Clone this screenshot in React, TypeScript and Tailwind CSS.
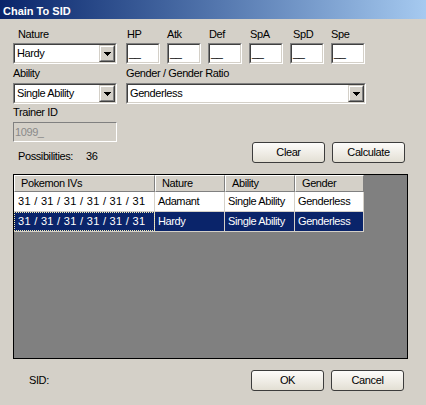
import React from "react";

function Sunken({
  className = "",
  inner = "bg-white",
  children,
}: {
  className?: string;
  inner?: string;
  children?: React.ReactNode;
}) {
  return (
    <div className={`border border-t-[#808080] border-l-[#808080] border-b-white border-r-white ${className}`}>
      <div className={`h-full w-full border border-t-[#404040] border-l-[#404040] border-b-[#d4d0c8] border-r-[#d4d0c8] ${inner} flex items-center`}>
        {children}
      </div>
    </div>
  );
}

function DropBtn() {
  return (
    <div className="w-[16px] h-full border border-t-[#d4d0c8] border-l-[#d4d0c8] border-b-[#404040] border-r-[#404040]">
      <div className="w-full h-full border border-t-white border-l-white border-b-[#808080] border-r-[#808080] bg-[#d4d0c8] flex items-center justify-center">
        <svg width="7" height="4" viewBox="0 0 7 4" shapeRendering="crispEdges">
          <rect x="0" y="0" width="7" height="1" fill="#000" />
          <rect x="1" y="1" width="5" height="1" fill="#000" />
          <rect x="2" y="2" width="3" height="1" fill="#000" />
          <rect x="3" y="3" width="1" height="1" fill="#000" />
        </svg>
      </div>
    </div>
  );
}

function Combo({ text, w }: { text: string; w: string }) {
  return (
    <Sunken className={`${w} h-[21px]`}>
      <span className="flex-1 pl-[2px] leading-[13px] whitespace-nowrap">{text}</span>
      <DropBtn />
    </Sunken>
  );
}

function StatBox({ label, pl }: { label: string; pl: string }) {
  return (
    <div className="w-[34px] flex flex-col">
      <div className={`h-[13px] leading-[13px] ${pl}`}>{label}</div>
      <Sunken className="mt-[2px] h-[21px] w-[34px]">
        <span className="pl-[1px] leading-[13px]">__</span>
      </Sunken>
    </div>
  );
}

function Btn({ label }: { label: string }) {
  return (
    <div className="w-[73px] h-[21px] rounded-[3px] border border-[#3c3c3c] bg-linear-to-b from-[#fdfcfa] to-[#e3dfd4] flex items-center justify-center leading-[13px]">
      {label}
    </div>
  );
}

const cols = ["w-[141px]", "w-[70px]", "w-[70px]", "w-[69px]"];
const headers = ["Pokemon IVs", "Nature", "Ability", "Gender"];
const rows = [
  ["31 / 31 / 31 / 31 / 31 / 31", "Adamant", "Single Ability", "Genderless"],
  ["31 / 31 / 31 / 31 / 31 / 31", "Hardy", "Single Ability", "Genderless"],
];

export default function App() {
  return (
    <div className="w-[426px] h-[405px] bg-[#d4d0c8] flex flex-col overflow-hidden text-[11px] tracking-[-0.4px] text-black font-['Liberation_Sans',Arial,sans-serif]">
      {/* Title bar */}
      <div className="h-[19px] shrink-0 bg-linear-to-r from-[#0a246a] to-[#a6caf0] pl-[3px] pt-[5px] leading-[13px] font-bold text-white tracking-normal">
        Chain To SID
      </div>

      {/* Row A */}
      <div className="flex pl-[13px] mt-[9px]">
        <div className="w-[104px] flex flex-col">
          <div className="h-[13px] leading-[13px] pl-[5px]">Nature</div>
          <div className="mt-[2px]">
            <Combo text="Hardy" w="w-[104px]" />
          </div>
        </div>
        <div className="ml-[9px] flex gap-[7px]">
          <StatBox label="HP" pl="pl-[1px]" />
          <StatBox label="Atk" pl="pl-0" />
          <StatBox label="Def" pl="pl-[1px]" />
          <StatBox label="SpA" pl="pl-[1px]" />
          <StatBox label="SpD" pl="pl-[3px]" />
          <StatBox label="Spe" pl="pl-0" />
        </div>
      </div>

      {/* Row B */}
      <div className="flex pl-[13px] mt-[3px]">
        <div className="w-[104px] flex flex-col">
          <div className="h-[13px] leading-[13px]">Ability</div>
          <div className="mt-[3px]">
            <Combo text="Single Ability" w="w-[104px]" />
          </div>
        </div>
        <div className="ml-[9px] w-[240px] flex flex-col">
          <div className="h-[13px] leading-[13px]">Gender / Gender Ratio</div>
          <div className="mt-[3px]">
            <Combo text="Genderless" w="w-[240px]" />
          </div>
        </div>
      </div>

      {/* Row C */}
      <div className="flex items-end justify-between pl-[13px] pr-[21px]">
        <div className="flex flex-col">
          <div className="mt-[2px] h-[13px] leading-[13px]">Trainer ID</div>
          <div className="mt-[3px] w-[104px] h-[20px] border border-t-[#808080] border-l-[#808080] border-b-white border-r-white flex items-center">
            <span className="pl-[1px] leading-[13px] text-[#8a8a8a]">1099_</span>
          </div>
          <div className="mt-[8px] h-[13px] leading-[13px] pl-[5px] flex">
            <span className="w-[68px]">Possibilities:</span>
            <span>36</span>
          </div>
        </div>
        <div className="flex gap-[7px]">
          <Btn label="Clear" />
          <Btn label="Calculate" />
        </div>
      </div>

      {/* List view */}
      <div className="ml-[13px] mt-[11px] w-[395px] h-[185px] shrink-0 border border-black bg-[#808080] flex flex-col">
        <div className="flex h-[17px] shrink-0">
          {headers.map((h, i) => (
            <div
              key={h}
              className={`${cols[i]} h-full bg-[#d4d0c8] border border-t-white border-l-white border-b-[#808080] border-r-[#808080] flex items-center pl-[6px] leading-[13px] whitespace-nowrap`}
            >
              {h}
            </div>
          ))}
        </div>
        {rows.map((r, ri) => {
          const sel = ri === 1;
          return (
            <div
              key={ri}
              className={`flex h-[20px] shrink-0 w-[350px] border-b border-b-[#d4d0c8] ${sel ? "bg-[#0a246a] text-white" : "bg-white"}`}
            >
              {r.map((c, ci) => (
                <div
                  key={ci}
                  className={`${cols[ci]} h-full border-r border-r-[#d4d0c8] flex items-center leading-[13px] whitespace-nowrap ${
                    ci === 0 ? "pl-[4px] tracking-[0.3px]" : "pl-[3px]"
                  } ${sel && ci === 0 ? "outline-1 outline-dotted outline-[#f0eab0] outline-offset-[-1px]" : ""}`}
                >
                  {c}
                </div>
              ))}
            </div>
          );
        })}
      </div>

      {/* Bottom row */}
      <div className="mt-[11px] flex items-center justify-between pl-[29px] pr-[22px]">
        <span className="leading-[13px]">SID:</span>
        <div className="flex gap-[7px]">
          <Btn label="OK" />
          <Btn label="Cancel" />
        </div>
      </div>
    </div>
  );
}
